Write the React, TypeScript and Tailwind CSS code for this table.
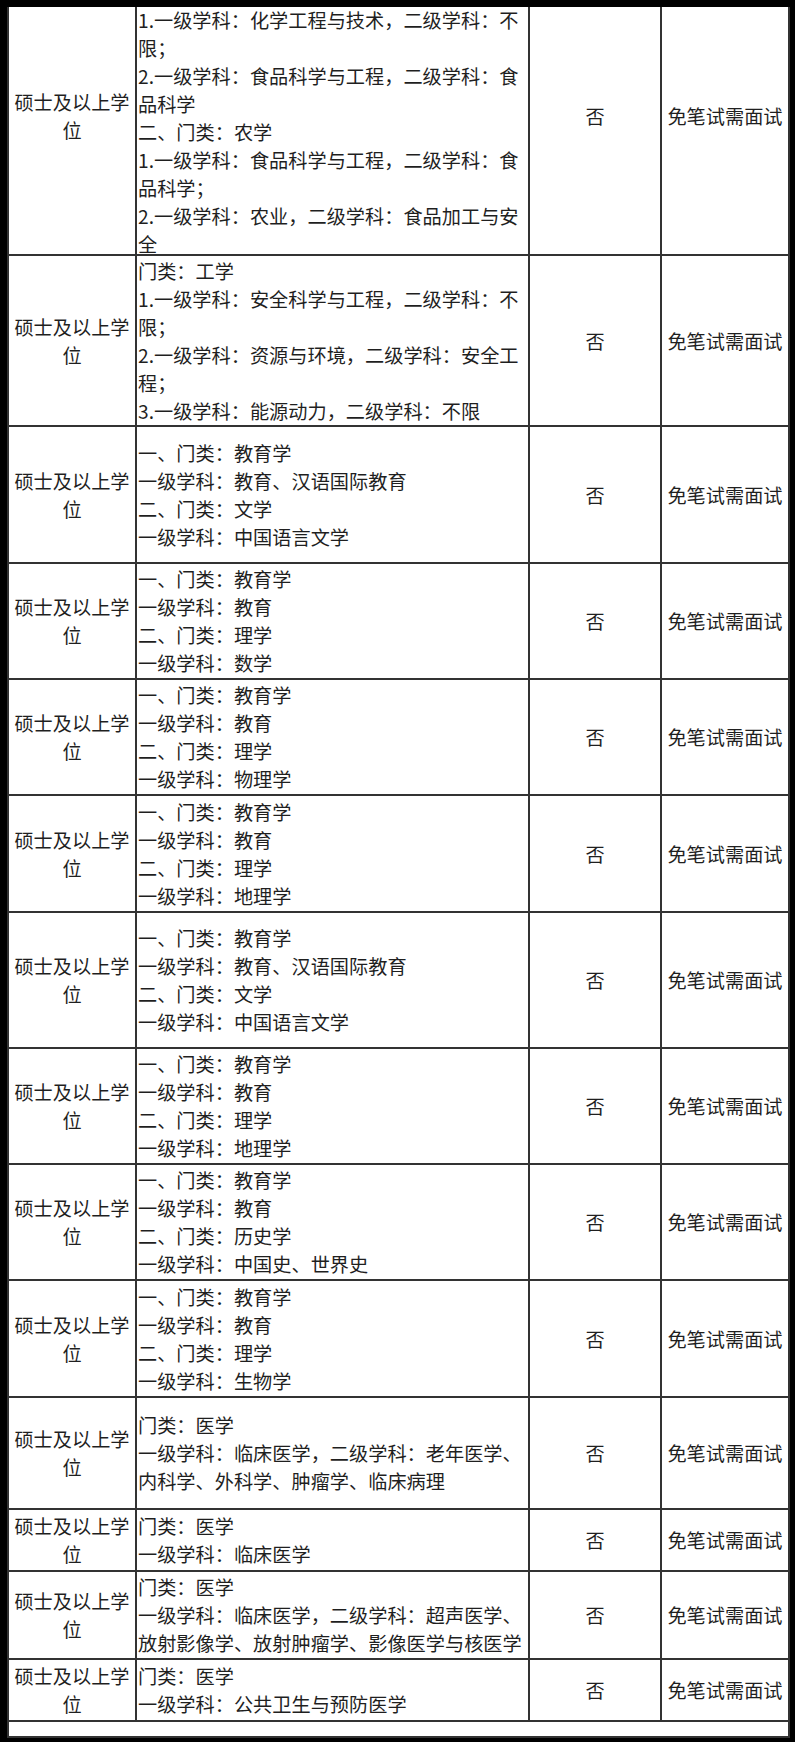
import React from "react";

type Row = { h: number; lines: (string | null)[]; pt?: boolean };

const rows: Row[] = [
  {
    h: 282,
    pt: true,
    lines: [
      null,
      "1.一级学科：化学工程与技术，二级学科：不",
      "限；",
      "2.一级学科：食品科学与工程，二级学科：食",
      "品科学",
      "二、门类：农学",
      "1.一级学科：食品科学与工程，二级学科：食",
      "品科学；",
      "2.一级学科：农业，二级学科：食品加工与安",
      "全",
    ],
  },
  {
    h: 171,
    lines: [
      "门类：工学",
      "1.一级学科：安全科学与工程，二级学科：不",
      "限；",
      "2.一级学科：资源与环境，二级学科：安全工",
      "程；",
      "3.一级学科：能源动力，二级学科：不限",
    ],
  },
  {
    h: 137,
    lines: ["一、门类：教育学", "一级学科：教育、汉语国际教育", "二、门类：文学", "一级学科：中国语言文学"],
  },
  { h: 116, lines: ["一、门类：教育学", "一级学科：教育", "二、门类：理学", "一级学科：数学"] },
  { h: 116, lines: ["一、门类：教育学", "一级学科：教育", "二、门类：理学", "一级学科：物理学"] },
  { h: 117, lines: ["一、门类：教育学", "一级学科：教育", "二、门类：理学", "一级学科：地理学"] },
  {
    h: 136,
    lines: ["一、门类：教育学", "一级学科：教育、汉语国际教育", "二、门类：文学", "一级学科：中国语言文学"],
  },
  { h: 116, lines: ["一、门类：教育学", "一级学科：教育", "二、门类：理学", "一级学科：地理学"] },
  { h: 116, lines: ["一、门类：教育学", "一级学科：教育", "二、门类：历史学", "一级学科：中国史、世界史"] },
  { h: 117, lines: ["一、门类：教育学", "一级学科：教育", "二、门类：理学", "一级学科：生物学"] },
  {
    h: 112,
    lines: ["门类：医学", "一级学科：临床医学，二级学科：老年医学、", "内科学、外科学、肿瘤学、临床病理"],
  },
  { h: 62, lines: ["门类：医学", "一级学科：临床医学"] },
  {
    h: 88,
    lines: ["门类：医学", "一级学科：临床医学，二级学科：超声医学、", "放射影像学、放射肿瘤学、影像医学与核医学"],
  },
  { h: 62, lines: ["门类：医学", "一级学科：公共卫生与预防医学"] },
];

export default function App() {
  return (
    <div
      className="w-[795px] h-[1742px] bg-black pt-[7px] pb-[4px] pl-[7px] pr-[5px] text-[19.2px] leading-[28px] text-[#1f1f1f]"
      style={{ fontFamily: '"Noto Sans CJK SC", "Noto Sans", sans-serif' }}
    >
      <div className="h-[1731px] overflow-hidden bg-white">
        <div className="mt-[-33px] border-l-2 border-r-2 border-[#333]">
          {rows.map((r, i) => (
            <div
              key={i}
              className="grid grid-cols-[128px_393px_132px_126px] border-b-2 border-[#333]"
              style={{ height: r.h }}
            >
              <div className="flex items-center justify-center border-r-2 border-[#333] px-[3px] text-center">
                硕士及以上学位
              </div>
              <div
                className={
                  r.pt
                    ? "flex flex-col justify-center border-r-2 border-[#333] pl-px pt-[4px]"
                    : "flex flex-col justify-center border-r-2 border-[#333] pl-px"
                }
              >
                {r.lines.map((l, j) =>
                  l === null ? (
                    <div key={j} className="h-[28px]" aria-hidden="true" />
                  ) : (
                    <div key={j} className="whitespace-nowrap">
                      {l}
                    </div>
                  )
                )}
              </div>
              <div className="flex items-center justify-center border-r-2 border-[#333]">否</div>
              <div className="flex items-center justify-center whitespace-nowrap">免笔试需面试</div>
            </div>
          ))}
          <div className="h-[16px] border-b-2 border-[#333]" />
        </div>
      </div>
    </div>
  );
}
